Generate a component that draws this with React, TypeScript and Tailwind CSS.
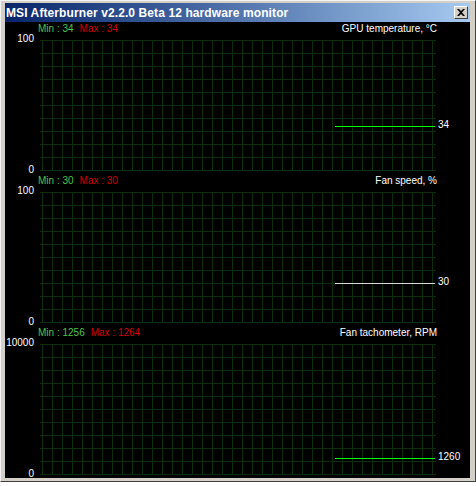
import React from "react";

type Series = {
  title: string;
  min: string;
  max: string;
  top: string;
  value: number;
  scale: number;
  label: string;
  color: string;
};

const series: Series[] = [
  { title: "GPU temperature, °C", min: "34", max: "34", top: "100", value: 34, scale: 100, label: "34", color: "#00ff00" },
  { title: "Fan speed, %", min: "30", max: "30", top: "100", value: 30, scale: 100, label: "30", color: "#d8d8d8" },
  { title: "Fan tachometer, RPM", min: "1256", max: "1264", top: "10000", value: 1260, scale: 10000, label: "1260", color: "#00ff00" },
];

const W = 396;
const H = 130;

const Grid = ({ s }: { s: Series }) => {
  const y = Math.round(H - (s.value / s.scale) * H) + 0.5;
  const rows = Array.from({ length: 11 }, (_, i) => i * 13 + 0.5);
  const cols = Array.from({ length: 40 }, (_, i) => i * 10 + 2.5);
  return (
    <svg width={W} height={H + 1} className="block shrink-0" shapeRendering="crispEdges">
      {rows.map((r) => (
        <line key={"r" + r} x1={0} x2={W} y1={r} y2={r} stroke="#0a2f0a" strokeWidth={1} />
      ))}
      {cols.map((c) => (
        <line key={"c" + c} x1={c} x2={c} y1={0} y2={H + 1} stroke="#0a2f0a" strokeWidth={1} />
      ))}
      <line x1={295} x2={395} y1={y} y2={y} stroke={s.color} strokeWidth={1} />
    </svg>
  );
};

const Section = ({ s }: { s: Series }) => {
  const y = Math.round(H - (s.value / s.scale) * H);
  return (
    <div className="h-[152px] shrink-0">
      <div className="h-[12px] flex items-center pl-[33px] pr-[33px] leading-[12px] pt-[1px]">
        <span className="text-[#4cc44c]">Min : {s.min}</span>
        <span className="ml-[6px] text-[#d00000]">Max : {s.max}</span>
        <span className="ml-auto text-white">{s.title}</span>
      </div>
      <div className="mt-[6px] h-[130px] flex">
        <div className="w-[29px] -mt-[7px] -mb-[6px] flex flex-col justify-between items-end text-white leading-[12px]">
          <span>{s.top}</span>
          <span>0</span>
        </div>
        <div className="ml-[6px]">
          <Grid s={s} />
        </div>
        <div className="relative flex-1">
          <span
            className="absolute left-[2px] text-white leading-[12px]"
            style={{ top: y - 7 }}
          >
            {s.label}
          </span>
        </div>
      </div>
    </div>
  );
};

export default function App() {
  return (
    <div className="w-[476px] h-[486px] bg-white overflow-hidden font-['Liberation_Sans',Arial,sans-serif]">
      <div className="w-[476px] h-[482px] bg-[#d4d0c8] border-t border-l border-t-[#f4f4f4] border-l-[#f4f4f4] border-r border-b border-r-[#404040] border-b-[#404040] pt-[2px] pl-[4px] pr-[5px] pb-[3px] flex flex-col">
        <div className="h-[19px] shrink-0 flex items-center pl-[1px] pr-[2px] bg-gradient-to-r from-[#0a246a] to-[#a6caf0]">
          <span className="text-white font-bold text-[12px] leading-[14px] tracking-[0.1px]">
            MSI Afterburner v2.2.0 Beta 12 hardware monitor
          </span>
          <button className="ml-auto w-[14px] h-[13px] bg-[#d4d0c8] border border-t-white border-l-white border-r-[#404040] border-b-[#404040] flex items-center justify-center p-0">
            <svg width="8" height="7" viewBox="0 0 8 7">
              <path d="M0 0 L2 0 L4 2 L6 0 L8 0 L5 3.5 L8 7 L6 7 L4 5 L2 7 L0 7 L3 3.5 Z" fill="#000" />
            </svg>
          </button>
        </div>
        <div className="h-[456px] bg-black overflow-hidden text-[10px] flex flex-col">
          {series.map((s) => (
            <Section key={s.title} s={s} />
          ))}
        </div>
      </div>
    </div>
  );
}
